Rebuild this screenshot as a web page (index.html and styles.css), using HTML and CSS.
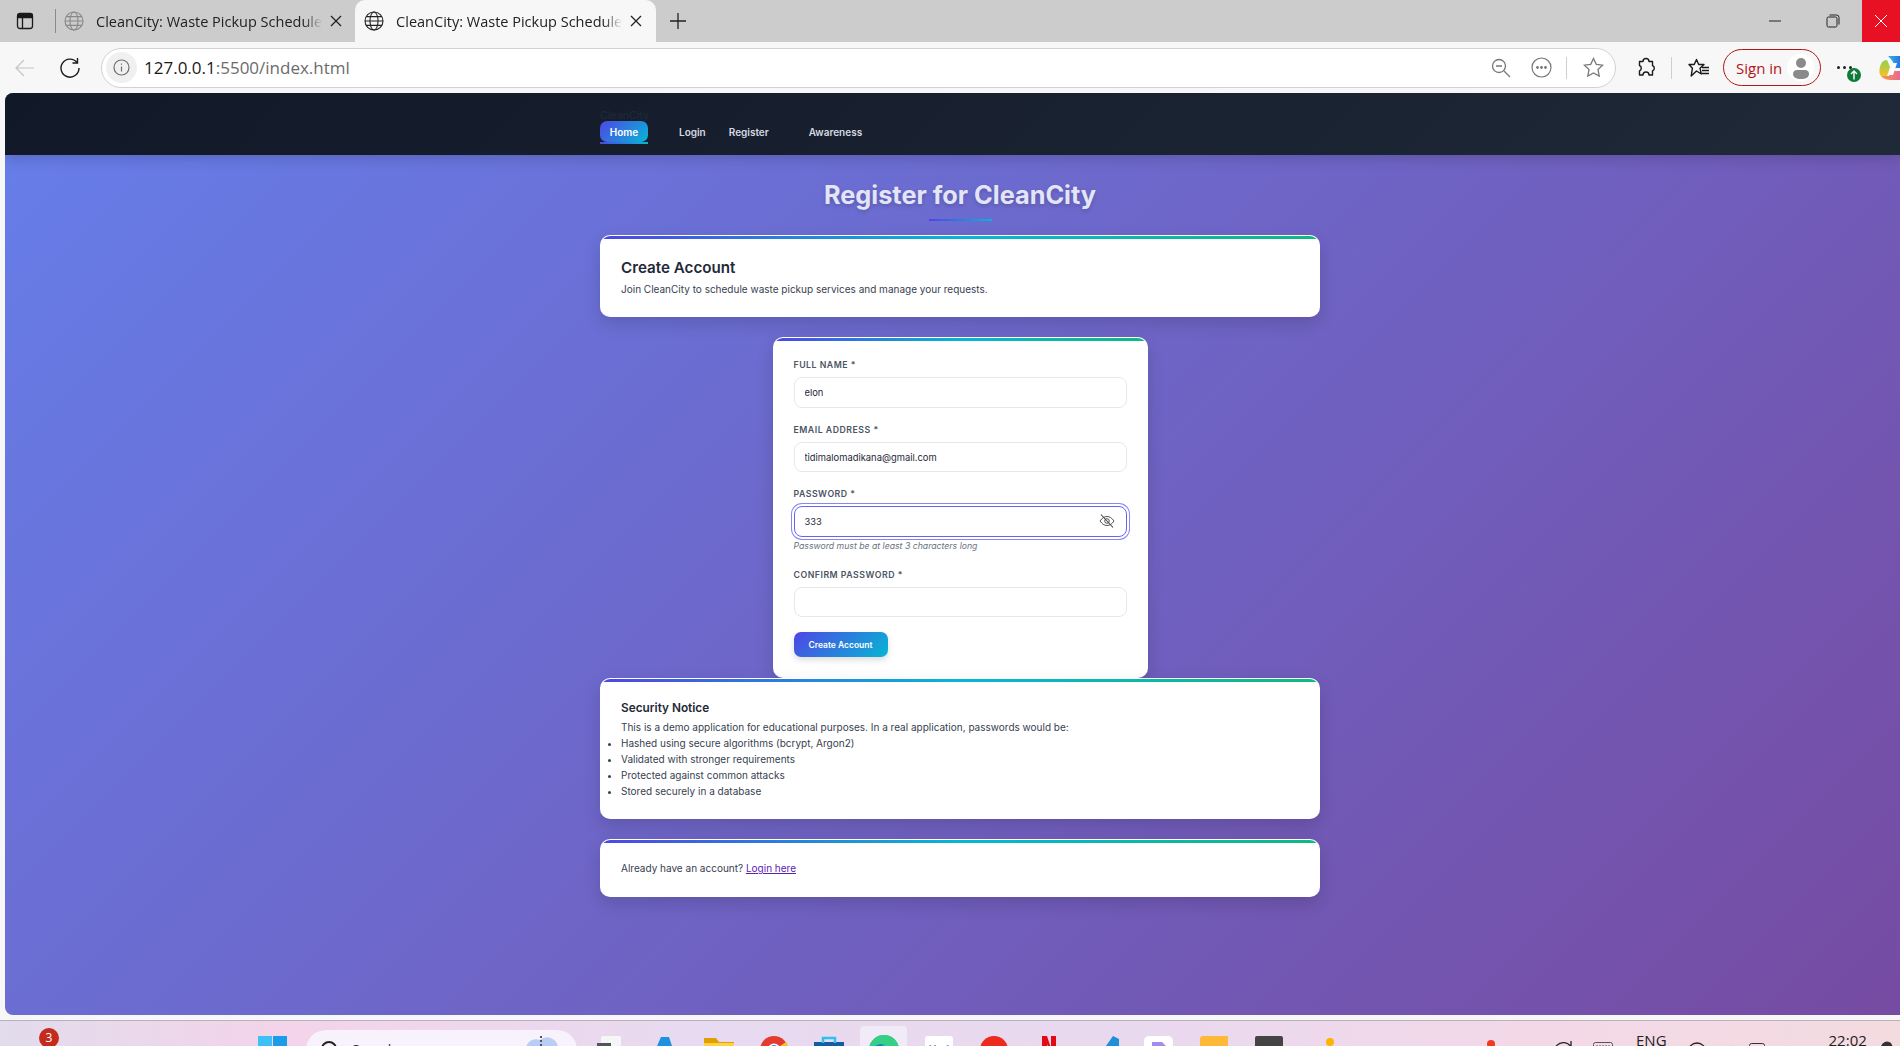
FILE: index.html
```html
<!DOCTYPE html>
<html lang="en">
<head>
  <meta charset="UTF-8">
  <title>CleanCity: Waste Pickup Scheduler</title>
  <link rel="stylesheet" href="styles.css">
</head>
<body>
  <div class="tabstrip">
    <svg class="side-icon" width="18" height="18" viewBox="0 0 18 18" fill="none" stroke="#1a1a1a" stroke-width="1.3"><rect x="1.5" y="1.5" width="15" height="15" rx="2.5"/><path d="M2 2.5h14v3H2z" fill="#1a1a1a"/><path d="M6.5 5.5v11"/></svg>
    <span class="tab-sep"></span>
    <div class="tab">
      <svg class="globe globe-dim" width="20" height="20" viewBox="0 0 20 20" fill="none" stroke-width="1.1"><circle cx="10" cy="10" r="9"/><ellipse cx="10" cy="10" rx="4" ry="9"/><path d="M1 10h18M2.2 5.6h15.6M2.2 14.4h15.6"/></svg>
      <span class="tab-title">CleanCity: Waste Pickup Schedule</span>
      <svg class="tab-close" width="12" height="12" viewBox="0 0 12 12" stroke="#222" stroke-width="1.3"><path d="M1 1l10 10M11 1L1 11"/></svg>
    </div>
    <div class="tab tab-active">
      <svg class="globe" width="20" height="20" viewBox="0 0 20 20" fill="none" stroke-width="1.1"><circle cx="10" cy="10" r="9"/><ellipse cx="10" cy="10" rx="4" ry="9"/><path d="M1 10h18M2.2 5.6h15.6M2.2 14.4h15.6"/></svg>
      <span class="tab-title">CleanCity: Waste Pickup Schedule</span>
      <svg class="tab-close" width="12" height="12" viewBox="0 0 12 12" stroke="#222" stroke-width="1.3"><path d="M1 1l10 10M11 1L1 11"/></svg>
    </div>
    <svg class="new-tab" width="18" height="18" viewBox="0 0 18 18" stroke="#222" stroke-width="1.3"><path d="M9 1v16M1 9h16"/></svg>
    <div class="win-controls">
      <span class="win-btn"><svg width="14" height="14" viewBox="0 0 14 14" stroke="#222" stroke-width="1"><path d="M1 7h12"/></svg></span>
      <span class="win-btn"><svg width="14" height="14" viewBox="0 0 14 14" fill="none" stroke="#222" stroke-width="1"><rect x="1" y="3" width="10" height="10" rx="1.5"/><path d="M3.5 1h7A2.5 2.5 0 0 1 13 3.5v7"/></svg></span>
      <span class="win-btn win-close"><svg width="14" height="14" viewBox="0 0 14 14" stroke="#fff" stroke-width="1"><path d="M1 1l12 12M13 1L1 13"/></svg></span>
    </div>
  </div>

  <div class="toolbar">
    <svg class="tool-back" width="20" height="20" viewBox="0 0 20 20" fill="none" stroke="#c4c4c4" stroke-width="1.2"><path d="M19 10H1M9 2l-8 8 8 8"/></svg>
    <svg class="tool-reload" width="22" height="22" viewBox="0 0 22 22" fill="none" stroke="#1a1a1a" stroke-width="1.4"><path d="M18 5.5A9 9 0 1 0 20 11"/><path d="M18.5 1v5h-5"/></svg>
    <div class="address">
      <span class="site-info"><svg width="17" height="17" viewBox="0 0 17 17" fill="none" stroke="#6f6f6f" stroke-width="1.2"><circle cx="8.5" cy="8.5" r="7.5"/><path d="M8.5 7.5v5M8.5 4.5v1.3"/></svg></span>
      <span class="url"><span class="url-host">127.0.0.1</span>:5500/index.html</span>
      <svg class="addr-icon addr-zoom" width="20" height="20" viewBox="0 0 20 20" fill="none" stroke="#777" stroke-width="1.3"><circle cx="8" cy="8" r="6.5"/><path d="M5 8h6M13 13l6 6"/></svg>
      <svg class="addr-icon addr-more" width="21" height="21" viewBox="0 0 21 21" fill="none" stroke="#777" stroke-width="1.2"><circle cx="10.5" cy="10.5" r="9.5"/><circle cx="6.5" cy="10.5" r=".8" fill="#777"/><circle cx="10.5" cy="10.5" r=".8" fill="#777"/><circle cx="14.5" cy="10.5" r=".8" fill="#777"/></svg>
      <span class="addr-sep"></span>
      <svg class="addr-icon addr-star" width="21" height="21" viewBox="0 0 21 21" fill="none" stroke="#777" stroke-width="1.3"><path d="M10.5 1.5l2.8 5.9 6.4.8-4.7 4.4 1.2 6.4-5.7-3.1-5.7 3.1 1.2-6.4L1.3 8.2l6.4-.8z"/></svg>
    </div>
    <svg class="tool-puzzle" width="20" height="22" viewBox="0 0 20 22" fill="none" stroke="#1a1a1a" stroke-width="1.4"><path d="M7 4.5a3 3 0 0 1 6 0h3.5v4a3 3 0 0 1 0 5.5v4H13a3 3 0 0 0-6 0H3.5v-4a3 3 0 0 0 0-5.5v-4z" stroke-linejoin="round"/></svg>
    <span class="tool-sep"></span>
    <svg class="tool-fav" width="22" height="20" viewBox="0 0 22 20" fill="none" stroke="#1a1a1a" stroke-width="1.4"><path d="M8.5 1.5l2.2 5h5.3l-4 3.8 1.3 5.7-4.800-3-5.300 5 1.200-7.700L1 6.500h5.200z" stroke-linejoin="round"/><path d="M14 9.5h7M14 12.5h7M14 15.5h7"/></svg>
    <div class="signin">
      <span>Sign in</span>
      <span class="avatar"><svg width="20" height="24" viewBox="0 0 20 24" fill="#8a8a8a"><circle cx="10" cy="7" r="5"/><path d="M2 18c0-3 2-4 4-4h8c2 0 4 1 4 4 0 3-3 5-8 5s-8-2-8-5z"/></svg></span>
    </div>
    <div class="tool-menu">
      <span class="menu-dots"><i></i><i></i><i></i></span>
      <span class="update-badge"><svg width="10" height="10" viewBox="0 0 10 10" fill="none" stroke="#fff" stroke-width="1.4"><path d="M5 9.5V1M2 4l3-3 3 3"/></svg></span>
    </div>
    <svg class="copilot" width="24" height="26" viewBox="0 0 24 26"><defs><linearGradient id="copA" x1="0" y1="0" x2="1" y2="0"><stop offset="0" stop-color="#2fb8e8"/><stop offset="1" stop-color="#2a63e0"/></linearGradient><linearGradient id="copB" x1="0" y1="0" x2="0" y2="1"><stop offset="0" stop-color="#8ed24c"/><stop offset="1" stop-color="#f7c02b"/></linearGradient><linearGradient id="copC" x1="0" y1="0" x2="1" y2="0"><stop offset="0" stop-color="#f79a3a"/><stop offset="1" stop-color="#e85fa5"/></linearGradient></defs><path d="M9 1h15v12h-8l-2-6c-1-2-2-3-5-6z" fill="url(#copA)"/><path d="M8 5c-4 0-6 3-7 7-1 3-1 7 1 9h6l3-9z" fill="url(#copB)"/><path d="M2 21c3 4 8 4 14 4h8V16h-8l-3-2-3 7z" fill="url(#copC)"/><path d="M14 8h4l-4 12h-4z" fill="#fff"/></svg>
  </div>

  <div class="viewport">
    <nav class="navbar">
      <div class="nav-inner">
        <span class="brand">CleanCity</span>
        <div class="nav-links">
          <a class="nav-link nav-active">Home</a>
          <a class="nav-link nav-login">Login</a>
          <a class="nav-link nav-register">Register</a>
          <a class="nav-link">Awareness</a>
        </div>
      </div>
    </nav>

    <main class="content">
      <h1 class="page-title">Register for CleanCity</h1>

      <section class="card card-intro">
        <h2>Create Account</h2>
        <p>Join CleanCity to schedule waste pickup services and manage your requests.</p>
      </section>

      <form class="card card-form">
        <label for="name">Full Name *</label>
        <input class="field" type="text" id="name" value="elon">

        <label for="email">Email Address *</label>
        <input class="field field-short" type="text" id="email" value="tidimalomadikana@gmail.com">

        <label for="password">Password *</label>
        <div class="password-wrap">
          <input class="field field-focus" type="text" id="password" value="333">
          <svg class="eye" width="16" height="14" viewBox="0 0 16 14" fill="none" stroke="#444" stroke-width=".9"><path d="M1 7c2-3 4.3-4.5 7-4.5S13 4 15 7c-2 3-4.3 4.5-7 4.5S3 10 1 7z"/><circle cx="8" cy="7" r="2.3"/><path d="M2 .5l12 13" stroke-width="1.1"/></svg>
        </div>
        <small class="hint">Password must be at least 3 characters long</small>

        <label for="confirm">Confirm Password *</label>
        <input class="field field-short" type="text" id="confirm">

        <button class="submit" type="button">Create Account</button>
      </form>

      <section class="card card-notice">
        <h3>Security Notice</h3>
        <p>This is a demo application for educational purposes. In a real application, passwords would be:</p>
        <ul>
          <li>Hashed using secure algorithms (bcrypt, Argon2)</li>
          <li>Validated with stronger requirements</li>
          <li>Protected against common attacks</li>
          <li>Stored securely in a database</li>
        </ul>
      </section>

      <section class="card card-login">
        <p>Already have an account? <a href="#">Login here</a></p>
      </section>
    </main>
  </div>

  <div class="taskbar">
    <span class="notif-badge">3</span>
    <svg class="start" width="29" height="29" viewBox="0 0 29 29"><path d="M0 0h14v14H0z" fill="#3dc0f5"/><path d="M15 0h14v14H15z" fill="#1b9be8"/><path d="M0 15h14v14H0z" fill="#2aa8ee"/><path d="M15 15h14v14H15z" fill="#0f85d9"/></svg>
    <div class="searchbox">
      <svg width="20" height="20" viewBox="0 0 20 20" fill="none" stroke="#222" stroke-width="2"><circle cx="9" cy="9" r="7"/><path d="M14 14l5 5"/></svg>
      <span class="search-text">Search</span>
      <svg class="search-cloud" width="48" height="26" viewBox="0 0 48 26"><path d="M6 26a8 8 0 0 1 3-14 10 10 0 0 1 14-8 11 11 0 0 1 18 8 8 8 0 0 1 3 14z" fill="#b9cdf6"/><path d="M24 0v26" stroke="#555" stroke-width="2" stroke-dasharray="2 2"/></svg>
    </div>
    <div class="apps">
      <span class="app"><svg width="24" height="24" viewBox="0 0 24 24"><rect x="4" width="20" height="24" rx="2" fill="#f6f6f6"/><rect y="7" width="14" height="8" fill="#555"/></svg></span>
      <span class="app"><svg width="30" height="24" viewBox="0 0 30 24"><path d="M2 24L12 1h8l4 12-8 11z" fill="#1f8fe0"/><circle cx="23" cy="18" r="7" fill="#b57de8"/></svg></span>
      <span class="app"><svg width="30" height="24" viewBox="0 0 30 24"><path d="M0 2h12l3 4h15v3H0z" fill="#e0a000"/><rect y="7" width="30" height="17" fill="#ffd04a"/></svg></span>
      <span class="app"><svg width="28" height="24" viewBox="0 0 28 24"><circle cx="14" cy="14" r="14" fill="#e33b2e"/><path d="M14 14L2 22a14 14 0 0 0 24 0z" fill="#35a853"/><path d="M14 14l12 8a14 14 0 0 0 0-16z" fill="#fbc02d"/><circle cx="14" cy="14" r="6.5" fill="#fff"/><circle cx="14" cy="14" r="5" fill="#4285f4"/></svg></span>
      <span class="app"><svg width="30" height="24" viewBox="0 0 30 24"><rect y="6" width="30" height="18" fill="#115ea3"/><path d="M9 7V2h12v5" fill="none" stroke="#2cc2f0" stroke-width="2.5"/><rect y="12" width="30" height="2" fill="#0c4f8b"/></svg></span>
      <span class="app app-active"><svg width="30" height="24" viewBox="0 0 30 24"><circle cx="15" cy="15" r="15" fill="#2eb8a8"/><path d="M0 15a15 15 0 0 1 15-15c8 0 15 6 15 15H10c-4 0-10 1-10 0z" fill="#35cf85"/><path d="M2 18C4 9 12 8 16 10c-4 0-8 3-8 14H6c-2-2-4-3-4-6z" fill="#0f7bd8"/></svg></span>
      <span class="app"><svg width="28" height="24" viewBox="0 0 28 24"><rect width="28" height="24" rx="3" fill="#fff"/><path d="M5 9l3 9h2V9M23 9l-3 9h-2" fill="none" stroke="#7fa4cf" stroke-width="2"/></svg></span>
      <span class="app"><svg width="28" height="24" viewBox="0 0 28 24"><circle cx="14" cy="14" r="14" fill="#ee2a1e"/><rect x="6" y="12" width="7" height="7" fill="#fff"/><rect x="15" y="12" width="7" height="7" fill="#fff"/></svg></span>
      <span class="app"><svg width="14" height="20" viewBox="0 0 14 20"><path d="M0 0h5l4 12V0h5v20H9L5 8v12H0z" fill="#e50914"/></svg></span>
      <span class="app"><svg width="30" height="24" viewBox="0 0 30 24"><path d="M0 17l6-5 6 5 12-17 6 3v21H18L6 15l-4 4z" fill="#1f8fd8"/></svg></span>
      <span class="app"><svg width="29" height="24" viewBox="0 0 29 24"><rect width="29" height="24" rx="5" fill="#fff"/><path d="M8 6h10l4 4v14H8z" fill="#a78be8"/><path d="M8 11h14v3H8z" fill="#7d5fd0"/></svg></span>
      <span class="app"><svg width="28" height="24" viewBox="0 0 28 24"><path d="M3 0h25v24H0V3a3 3 0 0 1 3-3z" fill="#ffb938"/><path d="M28 14L18 24h10z" fill="#d98a1c"/></svg></span>
      <span class="app"><svg width="28" height="24" viewBox="0 0 28 24"><rect width="28" height="24" rx="2" fill="#444"/></svg></span>
      <span class="app app-last"><svg width="18" height="20" viewBox="0 0 18 20"><circle cx="12" cy="6" r="4" fill="#ffb300"/><circle cx="4" cy="16" r="4" fill="#b7a4e6"/></svg></span>
    </div>
    <div class="tray">
      <span class="tray-dot"></span>
      <svg class="tray-cam" width="24" height="16" viewBox="0 0 24 16"><rect y="6" width="17" height="10" fill="#222"/><path d="M17 8l6-5v11z" fill="#222"/></svg>
      <svg class="tray-sync" width="22" height="20" viewBox="0 0 22 20" fill="none" stroke="#222" stroke-width="1.3"><path d="M19 7A9 9 0 1 0 20 14M19 1v6h-6"/></svg>
      <svg class="tray-keys" width="20" height="16" viewBox="0 0 20 16" fill="none" stroke="#555"><rect x=".5" y=".5" width="19" height="15" rx="2"/><path d="M3 4h14" stroke-dasharray="2 1"/></svg>
      <span class="tray-lang">ENG</span>
      <svg class="tray-wifi" width="20" height="16" viewBox="0 0 20 16" fill="none" stroke="#222" stroke-width="1.3"><circle cx="10" cy="10" r="9"/></svg>
      <svg class="tray-vol" width="16" height="16" viewBox="0 0 16 16" fill="none" stroke="#555"><path d="M1 12l6-8v12"/><path d="M10 3q3 5 0 10" stroke="#ccc"/></svg>
      <svg class="tray-batt" width="16" height="16" viewBox="0 0 16 16" fill="none" stroke="#333"><rect x=".5" y=".5" width="15" height="15" rx="2"/></svg>
      <span class="tray-time">22:02</span>
      <svg class="tray-bell" width="14" height="16" viewBox="0 0 14 16"><path d="M2 16V6a6 6 0 0 1 10-4l2 4v10z" fill="#333"/></svg>
    </div>
  </div>
</body>
</html>
```

FILE: styles.css
```css
* {
  box-sizing: border-box;
}

html,
body {
  height: 100%;
}

body {
  margin: 0;
  display: flex;
  flex-direction: column;
  height: 1046px;
  overflow: hidden;
  background-color: #f7f7f7;
  font-family: Inter, "Liberation Sans", sans-serif;
}

/* browser chrome */
.tabstrip {
  flex: 0 0 42px;
  display: flex;
  align-items: center;
  padding-left: 16px;
  background-color: #cccccc;
  font-family: "Open Sans", "Noto Sans", sans-serif;
}

.side-icon {
  flex: none;
}

.tab-sep {
  width: 1px;
  height: 24px;
  margin: 0 0 0 21px;
  background-color: #8a8a8a;
}

.tab {
  position: relative;
  flex: 0 0 297px;
  height: 42px;
  display: flex;
  align-items: center;
  padding: 0 13px 0 8px;
}

.tab-active {
  flex-basis: 300px;
  padding: 0 14px 0 9px;
  background-color: #f7f7f7;
  border-radius: 10px 10px 0 0;
}

.globe {
  flex: none;
  stroke: #222;
}

.globe-dim {
  stroke: #888;
}

.tab-title {
  flex: 1;
  margin-left: 12px;
  overflow: hidden;
  white-space: nowrap;
  font-size: 14.5px;
  color: #222;
  -webkit-mask-image: linear-gradient(90deg, #000 92%, transparent 100%);
  mask-image: linear-gradient(90deg, #000 92%, transparent 100%);
}

.tab-close {
  flex: none;
  margin-left: 8px;
}

.new-tab {
  margin-left: 13px;
}

.win-controls {
  display: flex;
  align-items: center;
  margin-left: auto;
  height: 42px;
}

.win-btn {
  width: 58px;
  height: 42px;
  display: flex;
  align-items: center;
  justify-content: center;
}

.win-close {
  width: 38px;
  background-color: #e81123;
}

.toolbar {
  flex: 0 0 51px;
  display: flex;
  align-items: center;
  padding-left: 15px;
  font-family: "Open Sans", "Noto Sans", sans-serif;
}

.tool-back,
.tool-reload {
  flex: none;
}

.tool-reload {
  margin-left: 24px;
}

.address {
  flex: none;
  width: 1515px;
  height: 40px;
  margin-left: 20px;
  display: flex;
  align-items: center;
  padding: 0 11px 0 4px;
  background-color: #fff;
  border: 1.5px solid #d2d2d2;
  border-radius: 20px;
}

.site-info {
  width: 31px;
  height: 31px;
  display: flex;
  align-items: center;
  justify-content: center;
  background-color: #f0f0f0;
  border-radius: 50%;
}

.url {
  margin-left: 7px;
  font-size: 17px;
  color: #6b6b6b;
}

.url-host {
  color: #1a1a1a;
}

.addr-zoom {
  margin-left: auto;
}

.addr-more {
  margin-left: 20px;
}

.addr-sep {
  width: 1px;
  height: 22px;
  margin: 0 16px 0 14px;
  background-color: #cfcfcf;
}

.tool-puzzle {
  flex: none;
  margin-left: 20px;
}

.tool-sep {
  flex: none;
  width: 1px;
  height: 22px;
  margin: 0 16px 0 15px;
  background-color: #cfcfcf;
}

.tool-fav {
  flex: none;
}

.signin {
  flex: none;
  width: 98px;
  height: 37px;
  margin-left: 13px;
  display: flex;
  align-items: center;
  justify-content: space-between;
  padding: 0 6px 0 12px;
  border: 1.5px solid #b3141a;
  border-radius: 19px;
  font-size: 15px;
  color: #b3141a;
}

.avatar {
  width: 27px;
  height: 27px;
  display: flex;
  align-items: center;
  justify-content: center;
  background-color: #fff;
  border-radius: 50%;
}

.tool-menu {
  flex: none;
  position: relative;
  width: 40px;
  height: 16px;
  margin-left: 3px;
  display: flex;
  justify-content: center;
  align-items: center;
}

.menu-dots {
  display: flex;
  gap: 3px;
}

.menu-dots i {
  width: 3px;
  height: 3px;
  background-color: #222;
  border-radius: 50%;
}

.update-badge {
  position: absolute;
  left: 23px;
  top: 8px;
  width: 14px;
  height: 14px;
  display: flex;
  align-items: center;
  justify-content: center;
  background-color: #0f7b3a;
  border-radius: 50%;
}

.copilot {
  flex: none;
  margin-left: 15px;
}

/* page */
.viewport {
  flex: 0 0 922px;
  margin-left: 5px;
  display: flex;
  flex-direction: column;
  overflow: hidden;
  border-radius: 8px 0 0 8px;
  background: linear-gradient(135deg, #667eea 0%, #764ba2 100%);
}

.navbar {
  position: relative;
  flex: 0 0 62px;
  padding-left: 15px;
  background: linear-gradient(135deg, #111827, #1f2937);
  box-shadow: 0 4px 12px rgba(0, 0, 0, 0.15);
}

.nav-inner {
  width: 720px;
  height: 62px;
  margin: 0 auto;
  padding-top: 17px;
}

.brand {
  display: block;
  height: 11px;
  font-size: 10.67px;
  line-height: 11px;
  color: #1f2a3c;
}

.nav-links {
  display: flex;
}

.nav-link {
  height: 21px;
  padding: 0 12px;
  font-size: 10px;
  font-weight: 600;
  line-height: 23px;
  color: #d6d9e0;
}

.nav-active {
  position: relative;
  width: 48px;
  margin-right: 19px;
  padding: 0;
  text-align: center;
  color: #fff;
  background: linear-gradient(135deg, #4f46e5, #06b6d4);
  border-radius: 7px;
}

.nav-active::after {
  content: "";
  position: absolute;
  left: 0;
  right: 0;
  bottom: -1.5px;
  height: 1.5px;
  background: linear-gradient(90deg, #4f46e5, #06b6d4);
}

.nav-login {
  margin-right: -1px;
}

.nav-register {
  margin-right: 16px;
}

.content {
  flex: 1;
  padding-left: 15px;
  display: flex;
  flex-direction: column;
  align-items: center;
}

.page-title {
  position: relative;
  width: 720px;
  height: 80px;
  margin: 0;
  padding-top: 22px;
  text-align: center;
  font-size: 25.3px;
  font-weight: 700;
  line-height: 36px;
  color: #e3e5f6;
  text-shadow: 0 2px 4px rgba(0, 0, 0, 0.18);
}

.page-title::after {
  content: "";
  position: absolute;
  left: 329px;
  top: 64px;
  width: 63px;
  height: 2px;
  background: linear-gradient(90deg, #4f46e5, #06b6d4);
}

.card {
  position: relative;
  width: 720px;
  overflow: hidden;
  background-color: #fff;
  border: 1px solid rgba(255, 255, 255, 0.85);
  border-radius: 10px;
  box-shadow: 0 7px 17px rgba(0, 0, 0, 0.14);
  padding: 0 20px;
}

.card::before {
  content: "";
  position: absolute;
  left: 0;
  right: 0;
  top: 0;
  height: 3px;
  background: linear-gradient(90deg, #4f46e5, #06b6d4, #10b981);
}

.card-intro {
  height: 82px;
  margin-bottom: 20px;
  padding-top: 22px;
}

.card-intro h2 {
  margin: 0;
  font-size: 15.2px;
  font-weight: 600;
  line-height: 20px;
  color: #1f2937;
}

.card-intro p {
  margin: 3px 0 0;
  font-size: 10px;
  line-height: 16px;
  color: #374151;
}

.card-form {
  width: 375px;
  height: 341px;
  padding: 21px 20px 0;
}

.card-form label {
  display: block;
  height: 12px;
  margin-bottom: 6px;
  font-size: 8.75px;
  font-weight: 600;
  line-height: 12px;
  letter-spacing: 0.5px;
  text-transform: uppercase;
  color: #4b5563;
}

.field {
  display: block;
  width: 100%;
  height: 31px;
  margin-bottom: 16px;
  padding: 0 10px;
  font-family: inherit;
  font-size: 9.4px;
  color: #1f2937;
  background-color: #fff;
  border: 1.33px solid #e5e7eb;
  border-radius: 8px;
  outline: none;
}

.field-short {
  height: 30px;
}

.field-focus {
  margin-bottom: 0;
  border-color: #6366f1;
  box-shadow: 0 0 0 2px #fff, 0 0 0 3px #8b85ef;
}

.password-wrap {
  position: relative;
}

.eye {
  position: absolute;
  right: 12px;
  top: 8px;
}

.hint {
  display: block;
  height: 13px;
  margin: 3px 0 16px;
  font-size: 8.7px;
  font-style: italic;
  line-height: 13px;
  color: #6b7280;
}

.submit {
  display: block;
  width: 94px;
  height: 25px;
  margin-top: -1px;
  padding: 0;
  font-family: inherit;
  font-size: 8.5px;
  font-weight: 600;
  color: #fff;
  background: linear-gradient(135deg, #4f46e5, #06b6d4);
  border: none;
  border-radius: 7px;
  box-shadow: 0 3px 6px rgba(0, 0, 0, 0.14);
}

.card-notice {
  height: 141px;
  margin-bottom: 20px;
  padding-top: 21px;
}

.card-notice h3 {
  margin: 0;
  font-size: 11.8px;
  font-weight: 600;
  line-height: 17px;
  color: #1f2937;
}

.card-notice p {
  margin: 2px 0 0;
  font-size: 10px;
  line-height: 16px;
  color: #374151;
}

.card-notice ul {
  margin: 0;
  padding: 0;
}

.card-notice li {
  font-size: 10px;
  line-height: 16px;
  color: #374151;
}

.card-login {
  height: 58px;
  padding-top: 20px;
}

.card-login p {
  margin: 0;
  font-size: 10px;
  line-height: 16px;
  color: #374151;
}

.card-login a {
  color: #5b21b6;
}

/* taskbar, cut off by the bottom of the window */
.taskbar {
  flex: 0 0 26px;
  margin-top: 5px;
  display: flex;
  overflow: hidden;
  padding-left: 39px;
  border-top: 1px solid #b9b0bd;
  background: linear-gradient(90deg, #e2dcec 0%, #f4d4ea 15%, #e8daf0 35%, #e9d9ef 60%, #f3d9e8 80%, #f3dbe0 100%);
  font-family: "Open Sans", "Noto Sans", sans-serif;
}

.notif-badge {
  flex: none;
  width: 20px;
  height: 20px;
  margin-top: 7px;
  text-align: center;
  font-size: 12px;
  line-height: 20px;
  color: #fff;
  background-color: #c42b1c;
  border-radius: 50%;
}

.start {
  flex: none;
  margin: 15px 0 0 199px;
}

.searchbox {
  flex: none;
  width: 271px;
  height: 40px;
  margin: 9px 0 0 19px;
  display: flex;
  align-items: flex-start;
  padding: 10px 12px 0 14px;
  background-color: #f7f2fb;
  border-radius: 20px;
}

.search-text {
  margin-left: 12px;
  font-size: 14px;
  line-height: 20px;
  color: #333;
}

.search-cloud {
  margin: -4px 0 0 auto;
}

.apps {
  flex: none;
  margin-left: 4px;
  display: flex;
}

.app {
  flex: 0 0 55px;
  height: 30px;
  padding-top: 15px;
  display: flex;
  justify-content: center;
}

.app svg {
  flex: none;
}

.app-active {
  margin: 5px 4px 0;
  flex-basis: 47px;
  padding-top: 9px;
  background-color: #f1ebf7;
  border-radius: 4px 4px 0 0;
}

.app-last {
  margin-left: 3px;
}

.tray {
  flex: 1;
  display: flex;
  align-items: flex-start;
}

.tray-dot {
  flex: none;
  width: 8px;
  height: 8px;
  margin: 19px 0 0 133px;
  background-color: #ef3b24;
  border-radius: 50%;
}

.tray-cam {
  flex: none;
  margin: 22px 0 0 23px;
}

.tray-sync {
  flex: none;
  margin: 19px 0 0 10px;
}

.tray-keys {
  flex: none;
  margin: 21px 0 0 19px;
}

.tray-lang {
  flex: none;
  margin: 13px 0 0 23px;
  font-size: 15px;
  line-height: 12px;
  color: #222;
}

.tray-wifi {
  flex: none;
  margin: 21px 0 0 20px;
}

.tray-vol {
  flex: none;
  margin: 21px 0 0 14px;
}

.tray-batt {
  flex: none;
  margin: 22px 0 0 12px;
}

.tray-time {
  flex: none;
  margin: 13px 0 0 64px;
  font-size: 15px;
  line-height: 12px;
  color: #222;
}

.tray-bell {
  flex: none;
  margin: 20px 0 0 12px;
}
```
